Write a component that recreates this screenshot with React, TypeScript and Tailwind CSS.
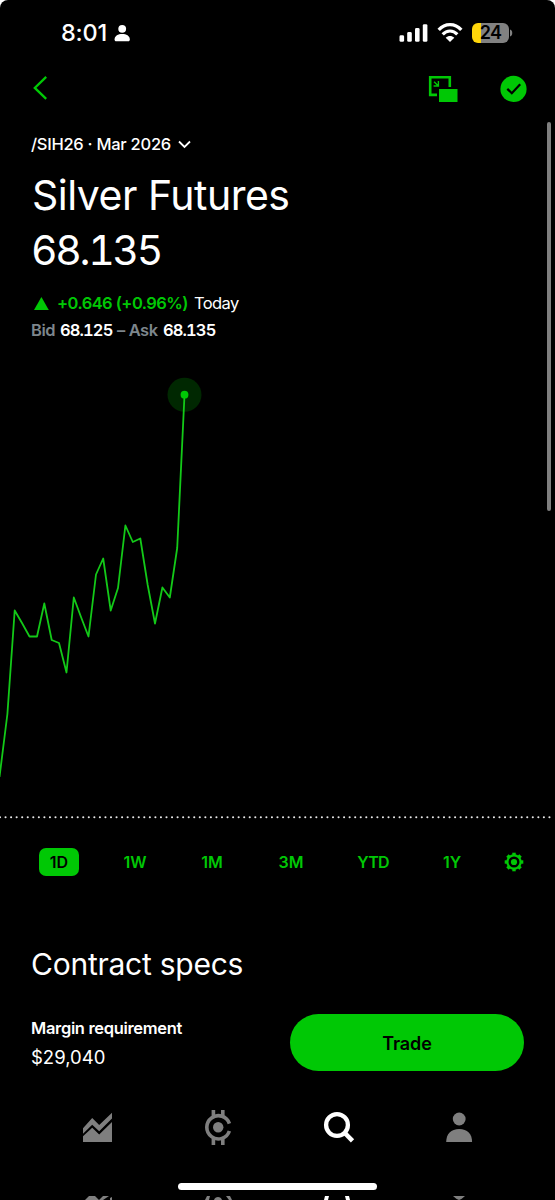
import type { ReactNode } from 'react';

const POINTS: [number, number][] = [
  [-0.5, 777], [7.4, 714], [14.7, 610.5], [22, 623], [29.5, 636.5], [37, 636.5], [44.3, 603.5],
  [51.7, 640], [59, 643], [66.5, 672.5], [73.8, 597.5], [81, 617], [88.5, 636.5], [96, 574.5],
  [103.2, 558.5], [110.7, 610.5], [118, 588], [125.4, 525.5], [132.8, 542], [140.3, 538.5],
  [147.7, 585], [155, 623.5], [162.4, 587.5], [169.8, 597.5], [177.2, 548], [184.5, 395],
];

const RANGES = [
  { label: '1W', className: 'ml-[36px] w-[40px]' },
  { label: '1M', className: 'ml-[37px] w-[40px]' },
  { label: '3M', className: 'ml-[39px] w-[40px]' },
  { label: 'YTD', className: 'ml-[42px] w-[40px] tracking-[-0.8px]' },
  { label: '1Y', className: 'ml-[39px] w-[40px]' },
];

const TEETH = [0, 45, 90, 135, 180, 225, 270, 315];

function StatusBar() {
  return (
    <div className="flex h-[64px] items-center pt-[2px] pl-[61px] pr-[42px]">
      <span className="w-[47px] whitespace-nowrap text-[23.5px] font-medium leading-none tracking-[-0.2px]">8:01</span>
      <svg className="ml-[6px]" width="17" height="18" viewBox="0 0 17 18" fill="currentColor">
        <circle cx="8.2" cy="4.8" r="3.9" />
        <path d="M.6 15.2c0-3.4 3.5-5.3 7.6-5.3s7.6 1.9 7.6 5.3c0 1.4-.5 2-1.6 2H2.2c-1.1 0-1.6-.6-1.6-2Z" />
      </svg>
      <div className="ml-auto flex items-center">
        <svg width="29" height="19" viewBox="0 0 29 19" fill="currentColor">
          <rect x="0.5" y="11.3" width="4.6" height="6.5" rx="1.4" />
          <rect x="8.2" y="8" width="4.6" height="9.8" rx="1.4" />
          <rect x="16" y="4.1" width="4.6" height="13.7" rx="1.4" />
          <rect x="23.8" y="0.2" width="4.6" height="17.6" rx="1.4" />
        </svg>
        <svg className="ml-[9px]" width="26" height="20" viewBox="0 0 26 20">
          <path d="M1.7 6.9C8-.1 18-.1 24.3 6.9" fill="none" stroke="currentColor" strokeWidth="3.3" />
          <path d="M5.7 11.3c4.2-4.4 10.4-4.4 14.6 0" fill="none" stroke="currentColor" strokeWidth="3.2" />
          <path d="M8.7 14.7c2.6-2.3 6-2.3 8.6 0L13 19Z" fill="currentColor" />
        </svg>
        <div className="ml-[9px] flex h-[20px] w-[37px] items-center justify-center rounded-[6px] bg-[linear-gradient(to_right,#ffd60a_9px,#818181_9px)]">
          <span className="text-[18px] font-semibold leading-none tracking-[-0.6px] text-black">24</span>
        </div>
        <svg className="ml-[1px]" width="3" height="8" viewBox="0 0 3 8">
          <path d="M0 0.5c3 .8 3 6.2 0 7Z" fill="#818181" />
        </svg>
      </div>
    </div>
  );
}

function NavBar() {
  return (
    <div className="flex h-[50px] items-center pl-[32px] pr-[28px] text-[#00c805]">
      <svg width="17" height="26" viewBox="0 0 17 26" fill="none" stroke="currentColor" strokeWidth="2.3">
        <path d="M14.2 0.9 2.8 11.9l11.4 11" />
      </svg>
      <svg className="ml-auto" width="30" height="28" viewBox="0 0 30 28">
        <path d="M9 19.9H2.2V2.2h19.6V12" fill="none" stroke="currentColor" strokeWidth="2.6" />
        <path d="M6.1 6.7 9.6 10.2M10.4 6v5H5.6" fill="none" stroke="currentColor" strokeWidth="1.4" />
        <rect x="11" y="14" width="18.5" height="13" fill="currentColor" />
      </svg>
      <svg className="ml-[42px]" width="27" height="28" viewBox="0 0 27 28">
        <circle cx="13.5" cy="13.9" r="13.1" fill="currentColor" />
        <path d="m7.3 13.9 4.5 4.4 8.4-9" fill="none" stroke="#000" strokeWidth="2.2" />
      </svg>
    </div>
  );
}

function PriceChart() {
  return (
    <svg className="block" width="555" height="486" viewBox="0 346 555 486">
      <line x1="0" y1="817.3" x2="552" y2="817.3" stroke="#e8e8e8" strokeWidth="2.1" strokeLinecap="round" strokeDasharray="0 5.55" />
      <circle cx="184.5" cy="394.7" r="17" fill="#002801" />
      <polyline points={POINTS.map((p) => p.join(',')).join(' ')} fill="none" stroke="#13c918" strokeWidth="1.8" strokeLinejoin="round" />
      <circle cx="184.5" cy="394.7" r="3.9" fill="#00c805" />
    </svg>
  );
}

function TabIcon({ x, children }: { x: string; children: ReactNode }) {
  return (
    <svg className={x} width="36" height="40" viewBox="0 0 36 40">
      {children}
    </svg>
  );
}

export default function App() {
  return (
    <div className="h-[1200px] w-[555px] bg-white font-[Inter,sans-serif] text-white">
      <div className="relative flex h-full flex-col overflow-hidden rounded-t-[8px] bg-black">
        <StatusBar />
        <NavBar />

        {/* Quote */}
        <div className="flex h-[232px] flex-col pl-[31px] pt-[19px]">
          <div className="flex h-[22px] items-center text-[16.5px] font-medium leading-none">
            <span className="whitespace-nowrap tracking-[-0.27px]">/SIH26 · Mar 2026</span>
            <svg className="ml-[7px]" width="13" height="9" viewBox="0 0 13 9" fill="none" stroke="currentColor" strokeWidth="1.8">
              <path d="m1 1.5 5.5 5.4L12 1.5" />
            </svg>
          </div>
          <h1 className="mt-[12px] h-[55px] whitespace-nowrap pl-px text-[41px] font-normal leading-[56px] tracking-[-0.5px]">Silver Futures</h1>
          <div className="h-[55px] text-[41px] leading-[56px] tabular-nums tracking-[-2.3px]">68.135</div>
          <div className="mt-[12px] flex h-[28px] items-center text-[16.5px] leading-none">
            <svg className="ml-[3px]" width="15" height="13" viewBox="0 0 15 13" fill="#00c805">
              <path d="M7.4 0 14.8 13H0Z" />
            </svg>
            <span className="ml-[8px] w-[131px] whitespace-nowrap font-semibold tracking-[-0.55px] text-[#00c805]">+0.646 (+0.96%)</span>
            <span className="ml-[6px] tracking-[-0.6px]">Today</span>
          </div>
          <div className="flex h-[27px] items-center whitespace-nowrap text-[16.5px] font-semibold leading-none tabular-nums tracking-[-0.5px]">
            <span className="w-[29px] text-[#7d868c]">Bid</span>
            <span className="w-[57px] tracking-[-0.9px]">68.125</span>
            <span className="w-[46px] text-[#7d868c]">– Ask</span>
            <span className="tracking-[-0.9px]">68.135</span>
          </div>
        </div>

        <PriceChart />

        {/* Range picker */}
        <div className="flex h-[60px] items-center pl-[39px] text-[16px] font-semibold leading-none text-[#00c805]">
          <button className="h-[28px] w-[40px] rounded-[7px] bg-[#00c805] text-black">1D</button>
          {RANGES.map((r) => (
            <button key={r.label} className={`h-[28px] ${r.className}`}>
              {r.label}
            </button>
          ))}
          <svg className="ml-[31.5px]" width="20" height="20" viewBox="-10 -10 20 20">
            <circle r="6.6" fill="none" stroke="currentColor" strokeWidth="2.2" />
            <circle r="3.1" fill="currentColor" />
            {TEETH.map((a) => (
              <rect key={a} x="-1.7" y="-9.3" width="3.4" height="3" fill="currentColor" transform={`rotate(${a})`} />
            ))}
          </svg>
        </div>

        {/* Contract specs */}
        <h2 className="mt-[51px] h-[42px] whitespace-nowrap pl-[31px] text-[30px] leading-[42px] tracking-[-0.25px]">Contract specs</h2>
        <div className="mt-[29px] flex h-[57px] justify-between pl-[31px] pr-[31px]">
          <div className="whitespace-nowrap">
            <div className="h-[28px] text-[16.5px] font-semibold leading-[28px] tracking-[-0.33px]">Margin requirement</div>
            <div className="h-[29px] text-[18.5px] leading-[30px]">$29,040</div>
          </div>
          <button className="h-[57px] w-[234px] rounded-full bg-[#00c805] pt-[2px] text-[18px] font-semibold leading-none tracking-[-0.1px] text-black">Trade</button>
        </div>

        {/* Tab bar */}
        <div className="mt-[36px] flex h-[40px] text-[#7f7f7f]">
          <TabIcon x="ml-[80px]">
            <path d="M3 21.2 12.2 11l7 7L32 5.7v5.8L19.2 24.3l-7-6.6L3 26.7Z" fill="currentColor" />
            <path d="M3 29.3 12.2 20.8l7 6.8L32 15v20H3Z" fill="currentColor" />
          </TabIcon>
          <TabIcon x="ml-[85px]">
            <path d="M28.4 16.6A11.6 11.6 0 1 0 28.4 24" fill="none" stroke="currentColor" strokeWidth="3.6" />
            <path d="M12.4 3v7M21.8 3v7M12.4 31v7M21.8 31v7" stroke="currentColor" strokeWidth="3.6" />
            <circle cx="17.2" cy="20.3" r="5.2" fill="currentColor" />
          </TabIcon>
          <TabIcon x="ml-[85px]">
            <circle cx="15" cy="18" r="10.9" fill="none" stroke="#fff" strokeWidth="4.3" />
            <path d="m22.3 25.5 8.2 8.3" stroke="#fff" strokeWidth="4.6" />
          </TabIcon>
          <TabIcon x="ml-[84px]">
            <circle cx="17.2" cy="12" r="6.4" fill="currentColor" />
            <path d="M4.2 35C4.2 27 9 22 17.2 22s12.9 5 12.9 13Z" fill="currentColor" />
          </TabIcon>
        </div>

        {/* Home indicator with the icon reflections under it */}
        <div className="mx-auto mt-[36px] h-[7px] w-[199px] shrink-0 rounded-full bg-white" />
        <svg className="mt-[6px] block shrink-0" width="555" height="4" viewBox="0 0 555 4">
          <path d="M85 4 89 0h6l4 4 4-4h6l-6 4ZM110 4V2l2-1v3ZM205 4l2-4h3l-1 4ZM214 4c1-4 7-4 8 0ZM226 0h4l2 4h-3Z" fill="#7f7f7f" />
          <path d="m324 4 1-4h4l-1 4ZM345 0h4l1 4h-4Z" fill="#fff" />
          <path d="M453 0h12q-3 3-6 4-3-1-6-4Z" fill="#7f7f7f" />
        </svg>

        {/* Scroll thumb */}
        <div className="absolute left-[547px] top-[122px] h-[389px] w-[4px] rounded-full bg-[#7f7f7f]" />
      </div>
    </div>
  );
}
